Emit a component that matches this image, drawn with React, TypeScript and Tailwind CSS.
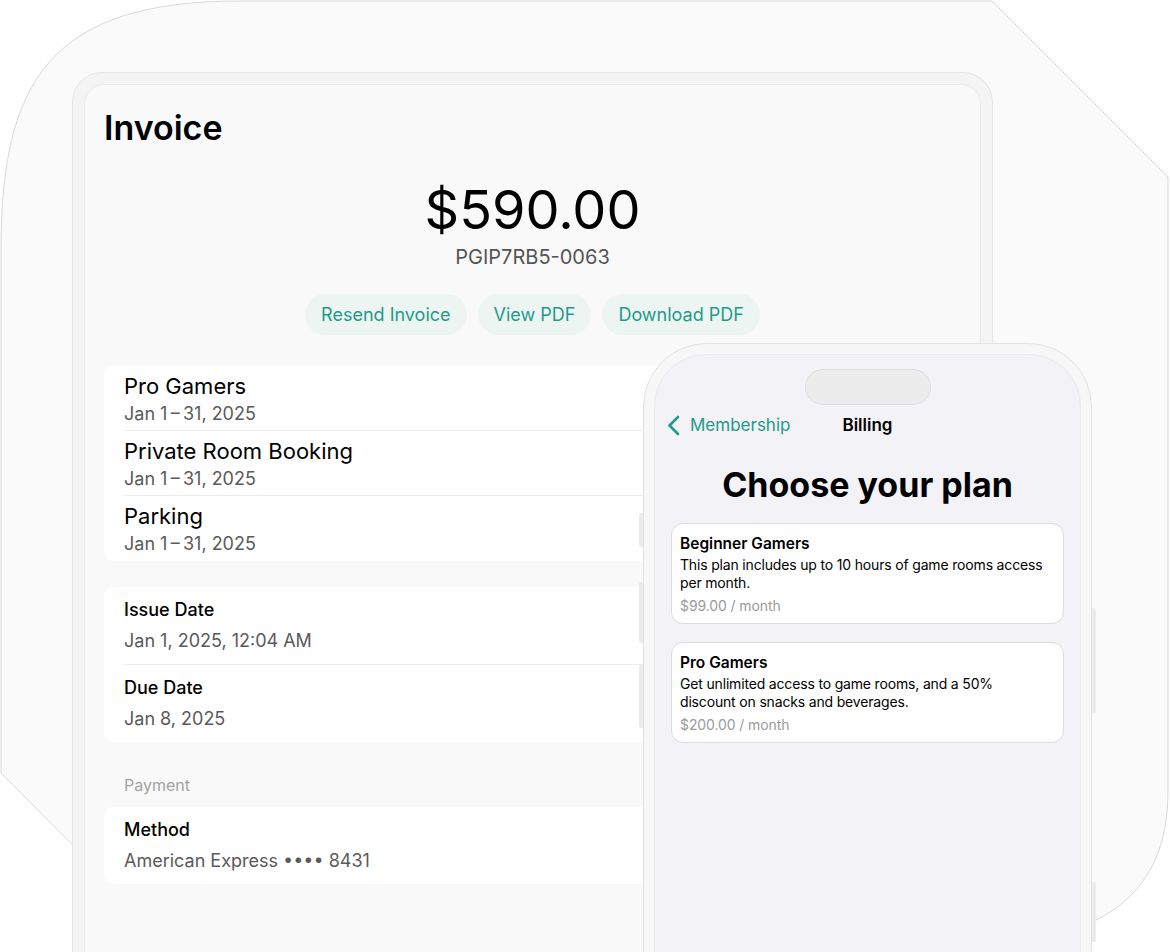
import React from 'react';

const lineItems = [
  { name: 'Pro Gamers', period: 'Jan 1\u2009–\u200931, 2025' },
  { name: 'Private Room Booking', period: 'Jan 1\u2009–\u200931, 2025' },
  { name: 'Parking', period: 'Jan 1\u2009–\u200931, 2025' },
];

const dates = [
  { label: 'Issue Date', value: 'Jan 1, 2025, 12:04 AM' },
  { label: 'Due Date', value: 'Jan 8, 2025' },
];

const plans = [
  {
    name: 'Beginner Gamers',
    desc: 'This plan includes up to 10 hours of game rooms access per month.',
    price: '$99.00 / month',
  },
  {
    name: 'Pro Gamers',
    desc: 'Get unlimited access to game rooms, and a 50% discount on snacks and beverages.',
    price: '$200.00 / month',
  },
];

const Backdrop: React.FC = () => (
  <svg className="absolute inset-0" width="1170" height="952" viewBox="0 0 1170 952">
    <path
      d="M 1 250 C 1 80, 51 1, 240 1 L 992 1 L 1168 177 L 1168 790 C 1168 900, 1100 953, 900 953 L 180 953 L 1 773 Z"
      fill="#fafafa"
      stroke="#d9d9d9"
      strokeWidth="1"
    />
  </svg>
);

const Tablet: React.FC = () => (
  <div className="w-[921px] h-[920px] rounded-[30px] border border-[#e5e5e5] bg-[#f4f4f4] p-[11px]">
    <div className="h-full rounded-[20px] border border-[#ebebeb] bg-[#f9f9f9] px-[19px] pt-[23px]">
      <h1 className="text-[34px] leading-[40px] font-semibold text-black">Invoice</h1>

      <div className="mt-[34px] text-center text-[54px] leading-[56px] text-black">$590.00</div>
      <div className="mt-[7px] text-center text-[20px] leading-[24px] text-[#555555]">PGIP7RB5-0063</div>

      <div className="mt-[25px] flex justify-center gap-[11px]">
        {['Resend Invoice', 'View PDF', 'Download PDF'].map(label => (
          <button
            key={label}
            className="h-[41px] px-4 rounded-full bg-[#edf5f2] text-[18px] text-[#1f9a8b]"
          >
            {label}
          </button>
        ))}
      </div>

      <div className="mt-[31px] rounded-[10px] bg-white">
        {lineItems.map((item, i) => (
          <div key={item.name} className="pl-5">
            <div className={`pr-5 pt-[7px] ${i < lineItems.length - 1 ? 'pb-[5px] border-b border-[#ececec]' : 'pb-[6px]'}`}>
              <div className="text-[22px] leading-[26px] text-black">{item.name}</div>
              <div className="mt-[4px] text-[18px] leading-[22px] text-[#5a5a5a]">{item.period}</div>
            </div>
          </div>
        ))}
      </div>

      <div className="mt-[26px] rounded-[10px] bg-white">
        {dates.map((d, i) => (
          <div key={d.label} className="pl-5">
            <div className={`pr-5 pt-3 pb-[12px] ${i < dates.length - 1 ? 'border-b border-[#ececec]' : ''}`}>
              <div className="text-[18px] leading-[22px] font-medium text-black">{d.label}</div>
              <div className="mt-[9px] text-[18px] leading-[22px] text-[#5a5a5a]">{d.value}</div>
            </div>
          </div>
        ))}
      </div>

      <div className="mt-[33px] pl-5 text-[16px] leading-[20px] text-[#a3a3a3]">Payment</div>

      <div className="mt-[12px] rounded-[10px] bg-white pl-5 pr-5 pt-3 pb-[12px]">
        <div className="text-[18px] leading-[22px] font-medium text-black">Method</div>
        <div className="mt-[9px] text-[18px] leading-[22px] text-[#5a5a5a]">American Express •••• 8431</div>
      </div>
    </div>
  </div>
);

const Phone: React.FC = () => (
  <div className="absolute left-[643px] top-[343px] w-[449px] h-[680px]">
    {/* side buttons */}
    <div className="absolute left-[-4px] top-[170px] w-[4px] h-[34px] rounded-l-[2px] bg-[#ebebeb]" />
    <div className="absolute left-[-4px] top-[239px] w-[4px] h-[61px] rounded-l-[2px] bg-[#ebebeb]" />
    <div className="absolute left-[-4px] top-[322px] w-[4px] h-[63px] rounded-l-[2px] bg-[#ebebeb]" />
    <div className="absolute right-[-4px] top-[265px] w-[4px] h-[105px] rounded-r-[2px] bg-[#ebebeb]" />
    <div className="absolute right-[-4px] top-[539px] w-[4px] h-[60px] rounded-r-[2px] bg-[#ebebeb]" />

    <div className="h-full rounded-[64px] border border-[#e2e2e2] bg-[#f7f7f7] pt-[10px] px-[10px]">
      <div className="h-full rounded-[52px] border border-[#ebebeb] bg-[#f2f2f7] px-[16px] pt-[14px]">
        <div className="mx-auto w-[126px] h-[36px] rounded-full border border-[#dedede] bg-[#ececec]" />

        <div className="mt-[9px] grid grid-cols-[1fr_auto_1fr] items-center h-[22px]">
          <div className="flex items-center gap-[10px] -ml-[4px]">
            <svg width="13" height="21" viewBox="0 0 13 21" fill="none">
              <path d="M11 2 L2.5 10.5 L11 19" stroke="#1f9a8b" strokeWidth="2.6" strokeLinecap="round" strokeLinejoin="round" />
            </svg>
            <span className="text-[17px] leading-[22px] text-[#1f9a8b]">Membership</span>
          </div>
          <span className="text-[17px] leading-[22px] font-semibold text-black">Billing</span>
          <div />
        </div>

        <h2 className="mt-[30px] text-center text-[34px] leading-[38px] font-bold text-black">Choose your plan</h2>

        <div className="mt-[19px] flex flex-col gap-[18px]">
          {plans.map(p => (
            <div key={p.name} className="rounded-[12px] border border-[#dcdcdc] bg-white pl-[8px] pr-[14px] pt-[10px] pb-[8px]">
              <div className="text-[15.5px] leading-[20px] font-semibold text-black">{p.name}</div>
              <div className="mt-[2px] text-[14px] leading-[18px] tracking-[-0.17px] text-black">{p.desc}</div>
              <div className="mt-[5px] text-[14px] leading-[18px] tracking-[-0.1px] text-[#9b9b9b]">{p.price}</div>
            </div>
          ))}
        </div>
      </div>
    </div>
  </div>
);

export default function App() {
  return (
    <div className="relative w-[1170px] h-[952px] overflow-hidden bg-white font-[Inter,sans-serif]">
      <Backdrop />
      <div className="relative pl-[72px] pt-[72px]">
        <Tablet />
      </div>
      <Phone />
    </div>
  );
}
